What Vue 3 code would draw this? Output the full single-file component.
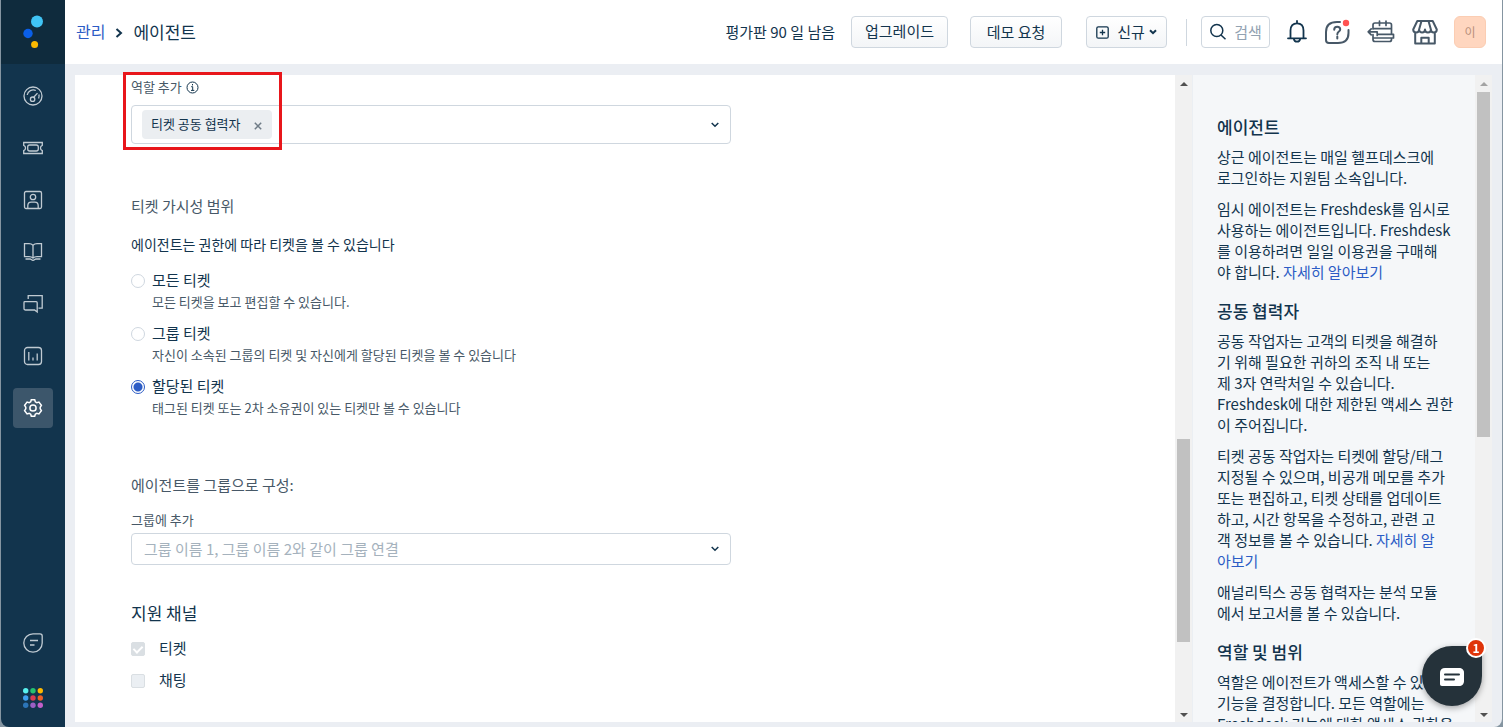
<script setup>
import { ref } from 'vue'

const visibility = ref('assigned')
const scopes = [
  { id: 'all', title: '모든 티켓', note: '모든 티켓을 보고 편집할 수 있습니다.' },
  { id: 'group', title: '그룹 티켓', note: '자신이 소속된 그룹의 티켓 및 자신에게 할당된 티켓을 볼 수 있습니다' },
  { id: 'assigned', title: '할당된 티켓', note: '태그된 티켓 또는 2차 소유권이 있는 티켓만 볼 수 있습니다' },
]
const dots = ['#58f0ee', '#25c16f', '#ffb800', '#3fa0ef', '#d83a52', '#ec5f26', '#2c75b8', '#9b5fc4', '#c25fc9']
</script>

<template>
  <div class="app">
    <nav class="rail" aria-label="주 메뉴">
      <a class="brand" href="#" aria-label="홈">
        <svg width="64" height="64" viewBox="0 0 64 64"><circle cx="36" cy="21.500" r="6" fill="#40c4f5" /><circle cx="27" cy="33.500" r="4.700" fill="#0a5fe8" /><circle cx="33.600" cy="44.500" r="3.500" fill="#fbb900" /></svg>
      </a>
      <div class="rail-list">
        <a href="#" aria-label="대시보드"><svg viewBox="0 0 20 20"><circle cx="10" cy="10" r="9" /><path d="M4.200 9A6.200 6.200 0 0 1 12.800 4.500M15.900 8.500a6 6 0 0 1-.3 4" /><circle cx="9.600" cy="13.200" r="2.200" /><path d="m10.700 11.300 3.800-4.200" /></svg></a>
        <a href="#" aria-label="티켓"><svg viewBox="0 0 20 20"><path d="M.7 4.500h18.600v2.800a2.900 2.900 0 0 0 0 5.400v2.800H.7v-2.800a2.900 2.900 0 0 0 0-5.400z" /><rect x="4.700" y="7" width="10.600" height="6" rx="2" /></svg></a>
        <a href="#" aria-label="연락처"><svg viewBox="0 0 20 20"><rect x="1.500" y="1.500" width="17" height="17" rx="1.500" /><circle cx="10" cy="7" r="2.700" /><path d="M4.800 18.300v-2.500c0-2.400 1.400-3.600 3.300-3.600h3.800c1.900 0 3.300 1.200 3.300 3.600v2.500" /></svg></a>
        <a href="#" aria-label="솔루션"><svg viewBox="0 0 20 20"><path d="M10 3.200C8.800 2 7.500 1.600 6 1.600H1.500v13H6c1.500 0 3 .4 4 1.500 1-1.100 2.500-1.500 4-1.500h4.500v-13H14c-1.500 0-2.800.4-4 1.600zM10 3.200v12.900M2.500 17h4.600c1 0 1.500 1.400 2.900 1.400s1.900-1.400 2.900-1.400h4.600" /></svg></a>
        <a href="#" aria-label="포럼"><svg viewBox="0 0 20 20"><path d="M5.200 5V1.600h14v12.600h-3.700M1.800 7.700h11.400c.6 0 1 .4 1 1v9.300l-2.600-2H2.600c-1 0-1.600-.6-1.600-1.600V8.500c0-.5.300-.8.800-.8z" /></svg></a>
        <a href="#" aria-label="분석"><svg viewBox="0 0 20 20"><rect x="1.500" y="1.500" width="17" height="17" rx="3" /><path d="M5.800 6v8.500M10 11.500v3M14.200 7.500v7" /></svg></a>
        <a href="#" aria-label="관리" class="active"><svg viewBox="0 0 20 20"><circle cx="10" cy="10" r="3.100" /><path d="M8.300 1.700h3.400l.6 2.100 1.500.8 2.100-.6 2.500 3.400-1.200 1.900v1.400l1.200 1.900-2.500 3.400-2.100-.6-1.500.8-.6 2.100H8.300l-.6-2.100-1.500-.8-2.100.6-2.500-3.400 1.200-1.900V9.300L1.600 7.400 4.100 4l2.100.6 1.500-.8z" /></svg></a>
      </div>
      <div class="rail-foot">
        <a href="#" aria-label="채팅"><svg viewBox="0 0 20 20"><path d="M10 .8h7c1.400 0 2.200.8 2.200 2.200v7A9.200 9.200 0 1 1 10 .8zM7 7.500h8M7 12h4.500" /></svg></a>
        <a href="#" aria-label="앱 전환">
          <svg viewBox="0 0 20 20"><circle v-for="(c, i) in dots" :key="c" :cx="2.700 + (i % 3) * 7.300" :cy="2.700 + Math.floor(i / 3) * 7.300" r="2.700" :fill="c" stroke="none" /></svg>
        </a>
      </div>
    </nav>

    <div class="page">
      <header class="top">
        <div class="crumbs">
          <a href="#">관리</a>
          <svg width="8" height="10" viewBox="0 0 8 10"><path d="m1.500 1 4.500 4-4.500 4" /></svg>
          <h1>에이전트</h1>
        </div>
        <span class="trial">평가판 90 일 남음</span>
        <button class="btn upgrade">업그레이드</button>
        <button class="btn demo">데모 요청</button>
        <button class="btn new">
          <svg width="13" height="13" viewBox="0 0 13 13"><rect x=".8" y=".8" width="11.400" height="11.400" rx="1.500" /><path d="M6.500 3.800v5.400M3.800 6.500h5.400" /></svg>
          <span>신규</span>
          <svg width="8" height="6" viewBox="0 0 8 6"><path class="bold" d="m1 1.200 3 3 3-3" /></svg>
        </button>
        <span class="rule"></span>
        <button class="search">
          <svg width="18" height="18" viewBox="0 0 18 18"><circle cx="7.800" cy="7.500" r="6" /><path d="m12 12 4.500 4.300" /></svg>
          <span>검색</span>
        </button>
        <div class="tools">
          <button aria-label="알림"><svg class="dark" width="20" height="24" viewBox="0 0 20 24"><path d="M1 18.300h18M3.500 18v-7.500C3.500 6 6 3.300 10 3.300s6.500 2.700 6.500 7.200V18M10 3V1M6.800 18.800c.3 1.900 1.500 2.900 3.200 2.900s2.900-1 3.200-2.900" /></svg></button>
          <button aria-label="도움말"><svg width="26" height="26" viewBox="0 0 26 26"><path d="M16 3H13C6 3 2 6.500 2 13v8c0 2 1 3 3 3h9c6.500 0 10.500-3.500 10.500-10v-3" /><path d="M10.200 10.700c0-2 1.300-2.900 3-2.900s3 1 3 2.600c0 2.200-2.900 2.200-2.900 4.800M13.300 17.500v2" /><circle cx="22" cy="4" r="3.200" fill="#ff5251" stroke="none" /></svg></button>
          <button aria-label="일정"><svg class="thin" width="28" height="26" viewBox="0 0 28 26"><path d="M6 10V6c0-1.300.7-2 2-2h14.500c1.300 0 2 .7 2 2v9M12.500 2v4.500M19 2v4.500M6 9.700h18.500M4.200 9.800 1.200 12.800l3 3M1.200 12.800h9v3.700M10.200 15.300h16.300v3.700M6 15.500v5c0 1.300.7 2 2 2h14.500c1.300 0 2-.7 2-2v-1.500M6 19h20.500" /></svg></button>
          <button aria-label="마켓플레이스"><svg width="26" height="26" viewBox="0 0 26 26"><path d="M5.300 2h15.400l4.100 8.500c0 4-5.900 4-5.900 0 0 4-5.900 4-5.900 0 0 4-5.900 4-5.900 0 0 4-5.900 4-5.900 0zM9.500 2l-2.400 8.500M16.500 2l2.400 8.500M3.200 13.500V24.500h19.600v-11M9.300 24.500v-5.800h7.400v5.800" /></svg></button>
        </div>
        <button class="avatar" aria-label="프로필">이</button>
      </header>

      <div class="workspace">
        <main class="panel">
          <form class="form" @submit.prevent>
            <div class="caption">
              <label for="role">역할 추가</label>
              <svg width="13" height="13" viewBox="0 0 13 13"><circle cx="6.500" cy="6.500" r="5.500" /><path d="M5.200 5.700h1.500v3.500M5 9.400h3.300M6.500 3v1.400" /></svg>
            </div>
            <div class="box roles">
              <span class="chip">티켓 공동 협력자
                <button type="button" aria-label="삭제"><svg width="8" height="8" viewBox="0 0 8 8"><path d="m.8.8 6.400 6.400M7.200.8.8 7.200" /></svg></button>
              </span>
              <input id="role" type="text">
              <svg class="caret" width="8" height="6" viewBox="0 0 8 6"><path d="m.7 1 3.300 3.300L7.300 1" /></svg>
            </div>

            <h2 class="scope-head">티켓 가시성 범위</h2>
            <p class="intro">에이전트는 권한에 따라 티켓을 볼 수 있습니다</p>
            <div class="scopes">
              <div v-for="s in scopes" :key="s.id" class="scope">
                <input :id="s.id" v-model="visibility" type="radio" name="scope" :value="s.id">
                <label :for="s.id">{{ s.title }}</label>
                <p>{{ s.note }}</p>
              </div>
            </div>

            <h2 class="group-head">에이전트를 그룹으로 구성:</h2>
            <label class="caption" for="group-add">그룹에 추가</label>
            <div class="box groups">
              <input id="group-add" type="text" placeholder="그룹 이름 1, 그룹 이름 2와 같이 그룹 연결">
              <svg class="caret" width="8" height="6" viewBox="0 0 8 6"><path d="m.7 1 3.300 3.300L7.300 1" /></svg>
            </div>

            <h2 class="channel-head">지원 채널</h2>
            <div class="channel"><input id="ch-ticket" type="checkbox" checked disabled><label for="ch-ticket">티켓</label></div>
            <div class="channel"><input id="ch-chat" type="checkbox" disabled><label for="ch-chat">채팅</label></div>
          </form>
        </main>
        <div class="scroll main-scroll" aria-hidden="true">
          <i class="up"></i><div class="track"><b></b></div><i class="down"></i>
        </div>
        <aside class="help">
          <div class="help-text">
            <h3>에이전트</h3>
            <p>상근 에이전트는 매일 헬프데스크에<br>로그인하는 지원팀 소속입니다.</p>
            <p>임시 에이전트는 Freshdesk를 임시로<br>사용하는 에이전트입니다. Freshdesk<br>를 이용하려면 일일 이용권을 구매해<br>야 합니다. <a href="#">자세히 알아보기</a></p>
            <h3>공동 협력자</h3>
            <p>공동 작업자는 고객의 티켓을 해결하<br>기 위해 필요한 귀하의 조직 내 또는<br>제 3자 연락처일 수 있습니다.<br>Freshdesk에 대한 제한된 액세스 권한<br>이 주어집니다.</p>
            <p>티켓 공동 작업자는 티켓에 할당/태그<br>지정될 수 있으며, 비공개 메모를 추가<br>또는 편집하고, 티켓 상태를 업데이트<br>하고, 시간 항목을 수정하고, 관련 고<br>객 정보를 볼 수 있습니다. <a href="#">자세히 알<br>아보기</a></p>
            <p>애널리틱스 공동 협력자는 분석 모듈<br>에서 보고서를 볼 수 있습니다.</p>
            <h3>역할 및 범위</h3>
            <p>역할은 에이전트가 액세스할 수 있는<br>기능을 결정합니다. 모든 역할에는<br>Freshdesk 기능에 대한 액세스 권한을</p>
          </div>
        </aside>
        <div class="scroll help-scroll" aria-hidden="true">
          <i class="up"></i><div class="track"><b></b></div><i class="down"></i>
        </div>
        <div class="marker"></div>
      </div>
    </div>

    <button class="chat" aria-label="채팅 열기">
      <svg width="24" height="18" viewBox="0 0 24 18"><path d="M5 0h14c3 0 5 2 5 4.500V13c0 3-2 5-5 5H2c-1.300 0-2-.7-2-2V4.500C0 2 2 0 5 0z" fill="#fff" /><path d="M5 6.500h14M5 11.500h9" stroke="#25323a" stroke-width="2" stroke-linecap="round" /></svg>
      <span class="count">1</span>
    </button>
  </div>
</template>

<style>
body {
  margin: 0;
  background: #8595a1;
}
</style>

<style scoped>
.app {
  box-sizing: border-box;
  display: flex;
  height: 100vh;
  min-height: 600px;
  padding: 0 1px;
  overflow: hidden;
  color: #12344d;
  font: 15px/21px "Noto Sans CJK KR", sans-serif;
}
* { box-sizing: border-box; }
a { color: #2c5cc5; text-decoration: none; }
button, input { font: inherit; color: inherit; }
button { cursor: pointer; }
h1, h2, h3, p { margin: 0; font-weight: 400; }
svg { display: block; flex: none; fill: none; stroke: #12344d; stroke-width: 1.5; }

.rail {
  display: flex;
  flex: none;
  flex-direction: column;
  width: 64px;
  background: #12344d;
  border-bottom-left-radius: 8px;
}
.brand { height: 64px; background: #0f2b3d; }
.brand svg { stroke: none; }
.rail-list, .rail-foot {
  display: flex;
  flex-direction: column;
  align-items: center;
  gap: 12px;
}
.rail-list { flex: 1; padding-top: 12px; }
.rail-foot { gap: 15px; padding-bottom: 9px; }
.rail a:not(.brand) {
  display: grid;
  place-items: center;
  width: 40px;
  height: 40px;
  border-radius: 4px;
}
.rail a:not(.brand) svg { width: 20px; height: 20px; stroke: #c0cad2; stroke-width: 1.3; overflow: visible; }
.rail a.active:not(.brand) { background: #3c566b; }
.rail a.active:not(.brand) svg { stroke: #fff; stroke-width: 1.5; }

.page {
  display: flex;
  flex: 1;
  flex-direction: column;
  min-width: 0;
  background: #ebeef3;
  border-bottom-right-radius: 8px;
}
.top {
  display: flex;
  align-items: center;
  height: 64px;
  padding: 0 16px 0 11px;
  background: #fff;
  white-space: nowrap;
}
.crumbs { display: flex; flex: 1; align-items: center; gap: 10px; font-size: 16px; }
.crumbs h1 { font-size: 17px; }
.crumbs svg { margin-top: 2px; stroke-width: 2; }
.crumbs a, .crumbs h1, .trial, .btn span, .search span { padding-bottom: 2px; }
.trial { margin-right: 16px; }
.btn, .search {
  display: flex;
  align-items: center;
  justify-content: center;
  height: 32px;
  padding: 0;
  border: 1px solid #cfd7df;
  border-radius: 4px;
  background: linear-gradient(#fff, #f3f5f7);
}
.upgrade { width: 97px; margin-right: 22px; padding-bottom: 3px; }
.demo { width: 92px; margin-right: 24px; padding-bottom: 2px; }
.new { gap: 8px; width: 81px; }
.new svg { stroke-width: 1.3; }
.new svg:last-child { margin-left: -4px; }
.new .bold { stroke-width: 2; }
.rule { width: 1px; height: 27px; margin: 0 14px 0 19px; background: #cfd7df; }
.search { gap: 7px; width: 69px; background: #fff; color: #92a2b1; }
.tools { display: flex; align-items: center; gap: 17px; margin: 0 16px 0 17px; }
.tools button { padding: 0; border: 0; background: none; }
.tools svg { stroke: #475867; stroke-width: 2; stroke-linejoin: round; stroke-linecap: round; }
.tools svg.dark { stroke: #12344d; stroke-width: 1.800; }
.tools svg.thin { stroke-width: 1.700; }
.avatar {
  width: 32px;
  height: 32px;
  padding: 0 0 2px;
  border: 1px solid #fbcdb3;
  border-radius: 6px;
  background: #ffd6bf;
  color: #b8907c;
  font-size: 12px;
}

.workspace {
  position: relative;
  display: flex;
  flex: 1;
  min-height: 0;
  padding: 11px 10px 5px;
}
.panel { flex: 1; min-width: 0; overflow: hidden; background: #fff; }
.form { max-width: 656px; padding: 2px 0 0 56px; }
.caption { display: flex; align-items: center; gap: 4px; color: #475867; font-size: 13px; line-height: 20px; }
.caption svg { stroke-width: 1; }
.box {
  display: flex;
  align-items: center;
  padding: 0 11px 0 10px;
  border: 1px solid #cfd7df;
  border-radius: 4px;
}
.box input { flex: 1; min-width: 0; height: 28px; padding: 0 2px 2px; border: 0; outline: 0; background: none; }
.box input::placeholder { color: #a5b2bd; opacity: 1; }
.roles { height: 39px; margin-top: 8px; }
.chip {
  display: flex;
  align-items: center;
  gap: 13px;
  height: 29px;
  padding: 0 10px 3px 9px;
  border-radius: 4px;
  background: #ebeef1;
  font-size: 13px;
}
.chip button { padding: 6px 0 0; border: 0; background: none; }
.chip svg { stroke: #6f7c87; }
.scope-head, .group-head { color: #475867; font-size: 15px; line-height: 22px; }
.scope-head { margin-top: 51px; }
.intro { margin-top: 17px; font-size: 14px; line-height: 20px; }
.scopes { display: grid; gap: 11px; margin-top: 16px; }
.scope { display: grid; grid-template-columns: 14px 1fr; column-gap: 7px; align-items: center; }
.scope label { padding-bottom: 2px; line-height: 20px; }
.scope p { grid-column: 2; color: #475867; font-size: 13px; line-height: 20px; }
input[type="radio"], input[type="checkbox"] { width: 14px; height: 14px; margin: 0; appearance: none; border: 1px solid #cfd7df; background: #fff; }
input[type="radio"] { border-radius: 50%; }
input[type="radio"]:checked { border-color: #2c5cc5; background: radial-gradient(#2c5cc5 0 4px, #fff 5px); }
.group-head { margin-top: 56px; }
.group-head + .caption { margin-top: 14px; }
.groups { height: 32px; margin-top: 3px; }
.channel-head { margin-top: 36px; font-size: 17px; line-height: 24px; }
.channel { display: flex; align-items: center; gap: 14px; height: 22px; margin-top: 10px; }
.channel label { padding-bottom: 3px; }
.channel-head + .channel { margin-top: 13px; }
input[type="checkbox"] { border-radius: 2px; background: #ebeff3; border-color: #dadfe3; }
input[type="checkbox"]:checked { display: grid; place-items: center; background: #dadfe3; }
input[type="checkbox"]:checked::after {
  content: "";
  width: 4px;
  height: 7px;
  margin-bottom: 2px;
  border: solid #fff;
  border-width: 0 2px 2px 0;
  rotate: 45deg;
}

.scroll {
  display: flex;
  flex: none;
  flex-direction: column;
  align-items: center;
  justify-content: space-between;
  width: 17px;
  background: #f1f1f1;
}
.scroll i { width: 0; border: 4px solid transparent; }
.scroll .up { margin-top: 3px; border-bottom-color: #505050; }
.scroll .down { margin-bottom: 1px; border-top-color: #505050; }
.help-scroll .up { border-bottom-color: #a3a3a3; }
.track { display: flex; flex: 1; flex-direction: column; width: 13px; margin: 6px 0 8px; }
.track b { background: #c1c1c1; }
.main-scroll .track::before { content: ""; flex: 347; }
.main-scroll b { flex: 203; }
.main-scroll .track::after { content: ""; flex: 63; }
.help-scroll b { flex: 345; }
.help-scroll .track::after { content: ""; flex: 268; }
.help { flex: none; width: 283px; overflow: hidden; border-left: 1px solid #ebeff3; background: #f5f7f9; }
.help-text { padding: 40px 20px 0 24px; white-space: nowrap; }
.help-text h3 { margin: 17px 0 7px; font-size: 17px; font-weight: 500; line-height: 24px; }
.help-text h3:first-child { margin-top: 0; }
.help-text p { margin-bottom: 10px; }

/* Highlight frame over the role field */
.marker {
  position: absolute;
  top: 8px;
  left: 58px;
  width: 159px;
  height: 78px;
  border: 3px solid #e8161b;
  pointer-events: none;
}
.chat {
  position: fixed;
  right: 21px;
  bottom: 21px;
  display: grid;
  place-items: center;
  width: 60px;
  height: 60px;
  padding: 0;
  border: 0;
  border-radius: 30px 8px 30px 30px;
  background: #25323a;
  box-shadow: 0 2px 6px rgb(0 0 0 / 35%);
}
.chat svg { margin-top: 1px; stroke: none; }
.count {
  position: absolute;
  top: -8px;
  right: -4px;
  width: 20px;
  height: 20px;
  border: 2px solid #fff;
  border-radius: 50%;
  background: #df3409;
  color: #fff;
  font-size: 12px;
  font-weight: 700;
  line-height: 16px;
}
</style>
